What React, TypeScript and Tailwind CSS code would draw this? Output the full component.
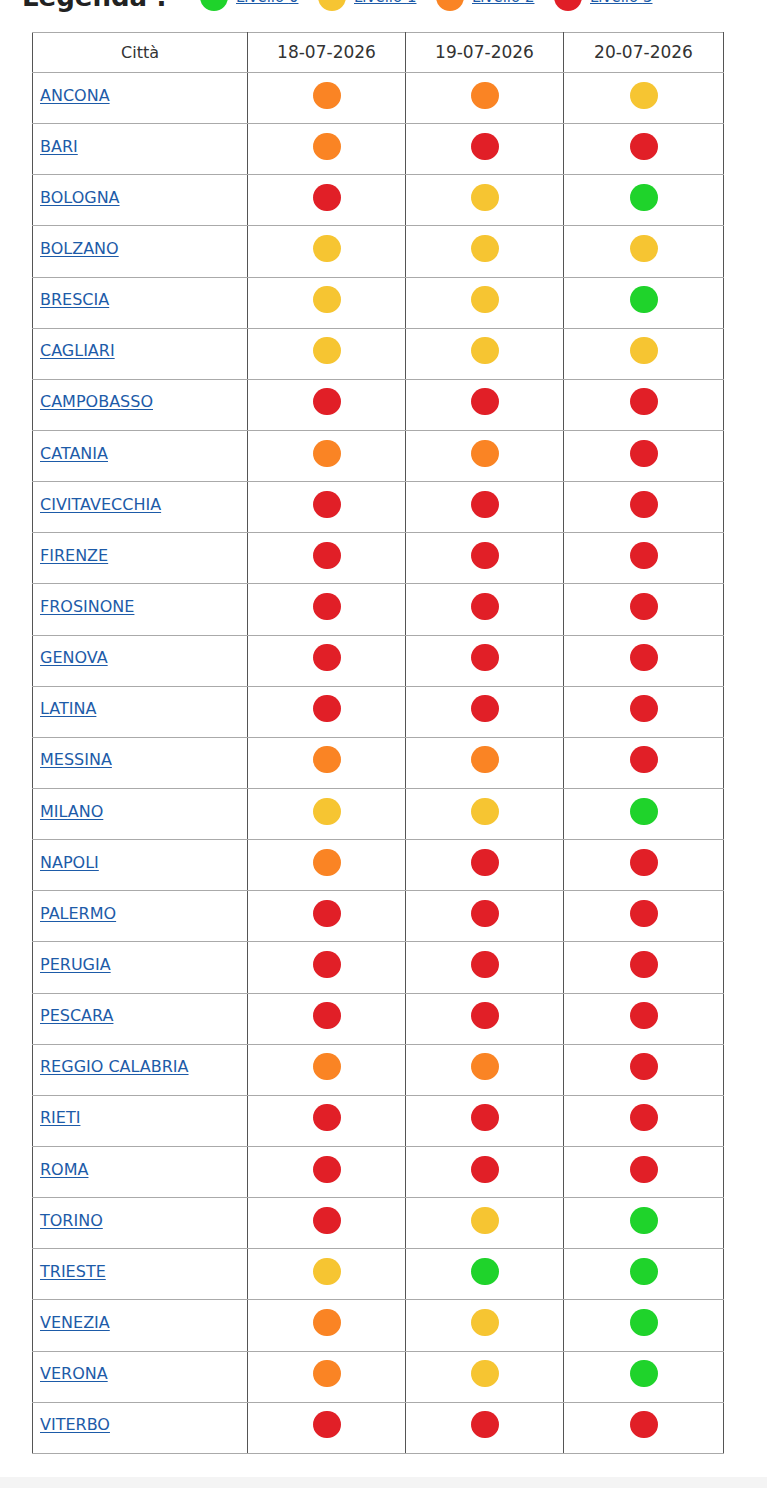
import React from 'react';

type Level = 0 | 1 | 2 | 3;

const dotColor: Record<Level, string> = {
  0: 'bg-[#1fd32b]',
  1: 'bg-[#f6c532]',
  2: 'bg-[#fa8424]',
  3: 'bg-[#e11f27]',
};

const dates = ['18-07-2026', '19-07-2026', '20-07-2026'];

const rows: [string, Level, Level, Level][] = [
  ['ANCONA', 2, 2, 1],
  ['BARI', 2, 3, 3],
  ['BOLOGNA', 3, 1, 0],
  ['BOLZANO', 1, 1, 1],
  ['BRESCIA', 1, 1, 0],
  ['CAGLIARI', 1, 1, 1],
  ['CAMPOBASSO', 3, 3, 3],
  ['CATANIA', 2, 2, 3],
  ['CIVITAVECCHIA', 3, 3, 3],
  ['FIRENZE', 3, 3, 3],
  ['FROSINONE', 3, 3, 3],
  ['GENOVA', 3, 3, 3],
  ['LATINA', 3, 3, 3],
  ['MESSINA', 2, 2, 3],
  ['MILANO', 1, 1, 0],
  ['NAPOLI', 2, 3, 3],
  ['PALERMO', 3, 3, 3],
  ['PERUGIA', 3, 3, 3],
  ['PESCARA', 3, 3, 3],
  ['REGGIO CALABRIA', 2, 2, 3],
  ['RIETI', 3, 3, 3],
  ['ROMA', 3, 3, 3],
  ['TORINO', 3, 1, 0],
  ['TRIESTE', 1, 0, 0],
  ['VENEZIA', 2, 1, 0],
  ['VERONA', 2, 1, 0],
  ['VITERBO', 3, 3, 3],
];

const Dot = ({ level, className = 'w-[28px] h-[27px]' }: { level: Level; className?: string }) => (
  <span className={`rounded-full ${className} ${dotColor[level]}`} />
);

export default function App() {
  return (
    <div className="min-h-[1488px] bg-white font-['DejaVu_Sans',sans-serif] text-[#222]">
      <div className="h-[1477px] overflow-hidden">
        {/* legenda, tagliata in alto */}
        <div className="mt-[-21px] flex h-[36px] items-center pl-[22px]">
          <span className="w-[178px] text-[26px] font-semibold leading-none text-[#222]">Legenda :</span>
          {([0, 1, 2, 3] as Level[]).map((l) => (
            <div key={l} className="flex w-[118px] items-center gap-[8px]">
              <Dot level={l} className="inline-block h-[28px] w-[28px]" />
              <a href="#" className="text-[15px] text-[#1d5ba8] underline">
                Livello {l}
              </a>
            </div>
          ))}
        </div>

        <table className="ml-[32px] mt-[17px] w-[691px] table-fixed border-collapse">
          <colgroup>
            <col className="w-[215px]" />
            <col className="w-[158px]" />
            <col className="w-[158px]" />
            <col className="w-[160px]" />
          </colgroup>
          <thead>
            <tr className="h-[40px]">
              <th className="border border-x-[#555] border-y-[#aaa] text-[16px] font-normal text-[#333]">Città</th>
              {dates.map((d) => (
                <th key={d} className="border border-x-[#555] border-y-[#aaa] text-[17px] font-normal text-[#333]">
                  {d}
                </th>
              ))}
            </tr>
          </thead>
          <tbody>
            {rows.map(([city, a, b, c]) => (
              <tr key={city} className="h-[51.15px]">
                <td className="border border-x-[#555] border-y-[#aaa] pb-[5px] pl-[7px] align-middle">
                  <a href="#" className="text-[16px] text-[#1d5ba8] underline underline-offset-2">
                    {city}
                  </a>
                </td>
                {[a, b, c].map((l, i) => (
                  <td key={i} className="border border-x-[#555] border-y-[#aaa] pb-[6px] align-middle">
                    <Dot level={l} className="mx-auto block h-[27px] w-[28px]" />
                  </td>
                ))}
              </tr>
            ))}
          </tbody>
        </table>
      </div>
      <div className="h-[11px] bg-[#f4f4f4]" />
    </div>
  );
}
